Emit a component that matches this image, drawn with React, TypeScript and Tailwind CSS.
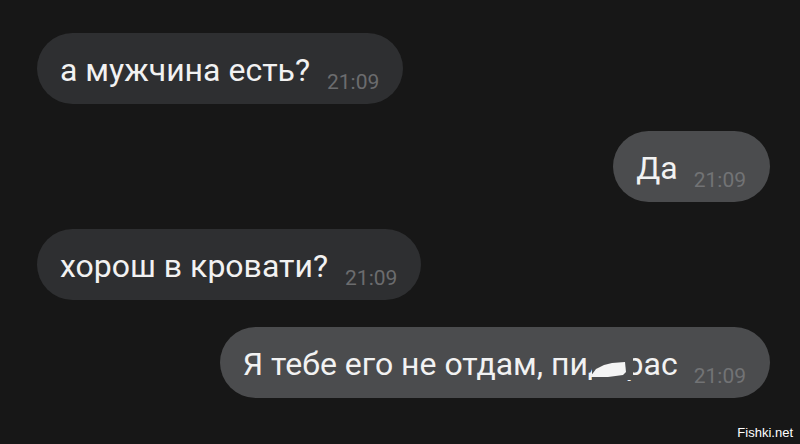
import React from "react";

type Msg = { text: React.ReactNode; time: string; mine: boolean };

function Censored() {
  // "дор" hidden under a bubble-coloured patch with a white scribble on top
  return (
    <span className="relative inline-block">
      дор
      <span className="absolute left-[4px] top-0 bottom-0 w-[41px] bg-[#4b4c4e]" />
      <svg
        className="absolute left-[2px] top-[14px]"
        width="37"
        height="16"
        viewBox="0 0 37 16"
      >
        <path d="M0 15 L6 7 L14 3 L22 1 L35 0 L36 10 L33 13 L18 15 Z" fill="#f4f4f4" />
      </svg>
    </span>
  );
}

const messages: Msg[] = [
  { text: "а мужчина есть?", time: "21:09", mine: false },
  { text: "Да", time: "21:09", mine: true },
  { text: "хорош в кровати?", time: "21:09", mine: false },
  {
    text: (
      <>
        Я тебе его не отдам, пи
        <Censored />
        ас
      </>
    ),
    time: "21:09",
    mine: true,
  },
];

function Bubble({ msg }: { msg: Msg }) {
  return (
    <div
      className={
        msg.mine
          ? "self-end mr-[30px] flex h-[71px] items-end rounded-full bg-[#4b4c4e] pl-[23px] pr-[24px] pb-[11px]"
          : "self-start ml-[37px] flex h-[71px] items-end rounded-full bg-[#2e2f31] pl-[23px] pr-[24px] pb-[11px]"
      }
    >
      <span className="mb-[7px] text-[32px] leading-[32px] text-[#f2f2f2] whitespace-nowrap">
        {msg.text}
      </span>
      <span
        className={
          msg.mine
            ? "ml-[16px] text-[21px] leading-none text-[#727375]"
            : "ml-[17px] text-[21px] leading-none text-[#6b6c6e]"
        }
      >
        {msg.time}
      </span>
    </div>
  );
}

export default function App() {
  return (
    <div
      className="relative flex h-[444px] w-[800px] flex-col gap-[27px] overflow-hidden bg-[#171717] pt-[33px]"
      style={{ fontFamily: "Roboto, 'Noto Sans', sans-serif" }}
    >
      {messages.map((m, i) => (
        <Bubble key={i} msg={m} />
      ))}

      {/* watermark */}
      <span
        className="absolute bottom-[5px] right-[7px] text-[13px] leading-none text-white"
        style={{ fontFamily: "'Liberation Sans', Arial, sans-serif" }}
      >
        Fishki.net
      </span>
    </div>
  );
}
